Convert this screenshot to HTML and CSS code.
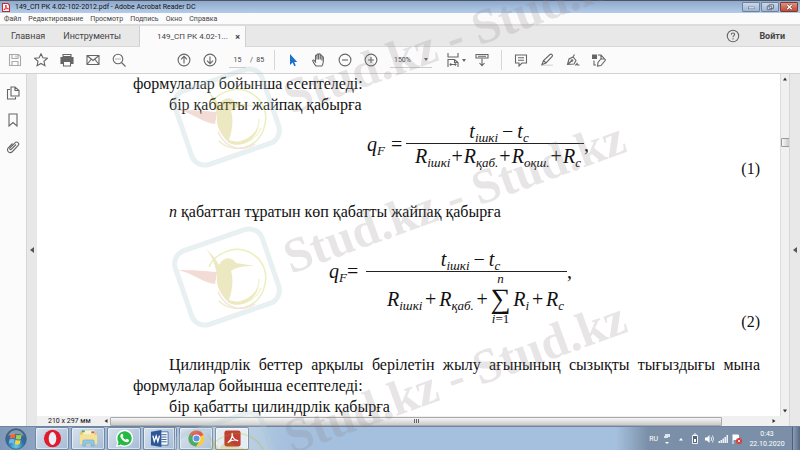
FILE: index.html
```html
<!DOCTYPE html>
<html lang="ru">
<head>
    <meta charset="UTF-8">
    <meta name="viewport" content="width=device-width, initial-scale=1.0">
    <title>149_СП РК 4.02-102-2012.pdf - Adobe Acrobat Reader DC</title>
    <link rel="stylesheet" href="styles.css">
</head>
<body>
    <header class="titlebar">
        <svg class="app-icon" viewBox="0 0 8 9"><path d="M0 0h6l2 2v7H0z" fill="#d3222a"/><path d="M1 1h4.5L7 2.500V8H1z" fill="#fff"/><path d="M1.800 7C3.500 5.500 4 3.500 3.800 2 4.200 4.500 5 5.500 6.500 5.800 4.500 5.300 3 5.900 1.800 7" fill="none" stroke="#d3222a" stroke-width=".9"/></svg>
        <span class="title">149_СП РК 4.02-102-2012.pdf - Adobe Acrobat Reader DC</span>
        <button class="win-btn" aria-label="Свернуть"><svg viewBox="0 0 16 9"><rect x="5" y="4.500" width="7" height="2" fill="#fff" stroke="#56657a" stroke-width=".6"/></svg></button>
        <button class="win-btn" aria-label="Восстановить"><svg viewBox="0 0 16 9"><path d="M7 2h5v4h-5zM5 3.500h5v4H5z" fill="#e8eef6" stroke="#4c5a70" stroke-width=".9"/></svg></button>
        <button class="win-btn close" aria-label="Закрыть"><svg viewBox="0 0 16 9"><path d="M6 2l5 5M11 2L6 7" stroke="#5d2a25" stroke-width="2.600"/><path d="M6 2l5 5M11 2L6 7" stroke="#fff" stroke-width="1.600"/></svg></button>
    </header>

    <nav class="menu">
        <a href="#">Файл</a>
        <a href="#">Редактирование</a>
        <a href="#">Просмотр</a>
        <a href="#">Подпись</a>
        <a href="#">Окно</a>
        <a href="#">Справка</a>
    </nav>

    <div class="tabs">
        <div class="main-tabs">
            <button>Главная</button>
            <button>Инструменты</button>
        </div>
        <div class="doc-tab">
            <span>149_СП РК 4.02-1...</span>
            <button aria-label="Закрыть вкладку">×</button>
        </div>
        <div class="account">
            <button aria-label="Помощь"><svg class="icon" viewBox="0 0 14 14"><circle cx="7" cy="7" r="5.700"/><path d="M5.300 5.700C5.300 3.300 8.800 3.500 8.600 5.500 8.500 6.600 7 6.700 7 8.200M7 9.300v1.200"/></svg></button>
            <button class="login">Войти</button>
        </div>
    </div>

    <div class="toolbar">
        <div class="tool-group">
            <button aria-label="Сохранить"><svg class="icon light" viewBox="0 0 14 14"><path d="M1.500 1.500h9l2 2v9h-11zM4 1.500v4h6v-4M4 12.500v-4h6v4M8 2.500v2"/></svg></button>
            <button aria-label="Избранное"><svg class="icon" viewBox="0 0 14 14"><path d="M7 .8l1.900 4 4.400.5-3.300 3 .9 4.400L7 10.500l-3.900 2.200.9-4.400-3.300-3 4.400-.5z"/></svg></button>
            <button aria-label="Печать"><svg class="icon" viewBox="0 0 14 14"><path d="M3 1.500h8v2H3z"/><path d="M1 4.500h12v6h-2v-2H3v2H1z" fill="#666"/><path d="M3.500 8.500h7v4.500h-7z" fill="#fff"/></svg></button>
            <button aria-label="Почта"><svg class="icon" viewBox="0 0 14 14"><path d="M1 2.500h12v9H1zM1 2.500l6 5 6-5M1 11.500L5 6.500M13 11.500L9 6.500"/></svg></button>
            <button aria-label="Найти"><svg class="icon" viewBox="0 0 14 14"><circle cx="6" cy="6" r="4.800"/><path d="M9.500 9.500l4 4"/><path d="M3.500 6h1M5.500 6h1M7.500 6h1"/></svg></button>
        </div>
        <div class="tool-group pages">
            <button aria-label="Предыдущая страница"><svg class="icon" viewBox="0 0 14 14"><circle cx="7" cy="7" r="5.900"/><path d="M7 10.500v-7M4 6.300l3-3 3 3"/></svg></button>
            <button aria-label="Следующая страница"><svg class="icon" viewBox="0 0 14 14"><circle cx="7" cy="7" r="5.900"/><path d="M7 3.500v7M4 7.700l3 3 3-3"/></svg></button>
            <input class="page-num" type="text" value="15" aria-label="Номер страницы">
            <span class="page-total">/&nbsp; 85</span>
        </div>
        <div class="tool-group">
            <button aria-label="Выделение"><svg class="icon" viewBox="0 0 14 14"><path d="M4 1v11l2.600-2.400L8.300 13.200l1.500-.8-1.600-3.400h3z" fill="#1d6fd0" stroke="none"/></svg></button>
            <button aria-label="Рука"><svg class="icon" viewBox="0 0 14 14"><path d="M4 13C2.500 11.500 1.500 9.500.8 8 .5 6.800 1.800 6.600 2.500 7.800L3.500 9V3c0-1 1.500-1 1.500 0v3.500V1.800c0-1 1.600-1 1.600 0V6.500v-5c0-1 1.700-1 1.700 0v5V2.800c0-1 1.600-1 1.600 0V7.500V4.500c0-1 1.500-1 1.500 0C11.500 8 11.500 11 9.800 13z"/></svg></button>
            <button aria-label="Уменьшить"><svg class="icon" viewBox="0 0 14 14"><circle cx="7" cy="7" r="5.900"/><path d="M4 7h6"/></svg></button>
            <button aria-label="Увеличить"><svg class="icon" viewBox="0 0 14 14"><circle cx="7" cy="7" r="5.900"/><path d="M4 7h6M7 4v6"/></svg></button>
        </div>
        <div class="zoom">
            <select aria-label="Масштаб"><option>150%</option></select>
            <svg class="caret" viewBox="0 0 4 3"><path d="M0 0h4L2 3z"/></svg>
        </div>
        <div class="tool-group view">
            <button class="fit" aria-label="По ширине"><svg class="icon" viewBox="0 0 14 14"><path d="M2 0v4h10V0M2 14V6.500h6.500L12 9.500V14M8.500 6.500v3H12M4 11.500h6M5.200 10.300L4 11.500l1.200 1.200M8.800 10.300l1.200 1.200-1.200 1.200"/></svg><svg class="caret" viewBox="0 0 4 3"><path d="M0 0h4L2 3z"/></svg></button>
            <button aria-label="Прокрутка"><svg class="icon" viewBox="0 0 14 14"><path d="M1 1.500h12v3.500H1zM3 3.200h8"/><path d="M7 5.500v7M4.500 10L7 12.700 9.500 10"/></svg></button>
        </div>
        <div class="tool-group">
            <button aria-label="Комментарий"><svg class="icon" viewBox="0 0 14 14"><path d="M1.500 2h11v8H8l-3 3v-3H1.500zM4 4.800h6M4 7.200h6"/></svg></button>
            <button aria-label="Маркер"><svg class="icon" viewBox="0 0 14 14"><path d="M1 11.500h12v1.500H1z" fill="#ddd" stroke="none"/><path d="M2 11.500l1.500-4L10 1.500c1.500-1 3.200.5 2.200 2L6 10zM3.500 7.500L6 10"/></svg></button>
            <button aria-label="Подпись"><svg class="icon" viewBox="0 0 14 14"><path d="M1.500 11.500l1.500-5.500 4-2 3 3.500-2 3.500zM7 4l1.500-2.500M1.500 11.500L5.500 8M9 12h1l1-1.500.5 1.500h2"/><circle cx="6" cy="7.500" r=".8"/></svg></button>
            <button aria-label="Другие инструменты"><svg class="icon" viewBox="0 0 14 14"><path d="M.5 2h4v3.500h-4z" fill="#666"/><path d="M6 2h3l4.500 5L9 12.500 5.500 13 6 9.500 9.500 5M2 7.500V12h2M9 2v4h3"/></svg></button>
        </div>
    </div>

    <main class="workspace">
        <aside class="sidebar">
            <button aria-label="Миниатюры"><svg class="icon" viewBox="0 0 14 14"><path d="M5 1h4l4 3.500V10H5zM9 1v3.500h4M4 3.500H1.500V13h8v-2"/></svg></button>
            <button aria-label="Закладки"><svg class="icon" viewBox="0 0 14 14"><path d="M3 1h8v12L7 9.500 3 13z"/></svg></button>
            <button aria-label="Вложения"><svg class="icon" viewBox="0 0 14 14"><path d="M10 4.500L5.500 9.200c-1 1-2.400-.3-1.400-1.400L9 2.800c2-2 5 .6 3 2.900L6.500 11.500c-2.800 2.800-6.700-.8-4.200-3.600L6.500 3.500"/></svg></button>
        </aside>
        <button class="collapse" aria-label="Показать панель"><svg class="tri" viewBox="0 0 4 6"><path d="M4 0v6L0 3z"/></svg></button>

        <section class="viewer">
            <article class="page" lang="kk">
                <p>формулалар бойынша есептеледі:</p>
                <p class="indent">бір қабатты жайпақ қабырға</p>

                <div class="equation first">
                    <div class="formula">
                        <span class="lhs"><i>q<sub>F</sub></i><span>=</span></span>
                        <div class="fraction">
                            <div class="numerator"><i>t<sub>ішкі</sub></i><span>−</span><i>t<sub>c</sub></i></div>
                            <div class="denominator">
                                <i>R<sub>ішкі</sub></i><span>+</span><i>R<sub>қаб.</sub></i><span>+</span><i>R<sub>оқш.</sub></i><span>+</span><i>R<sub>c</sub></i>
                            </div>
                        </div>
                        <span class="comma">,</span>
                    </div>
                    <span class="eq-num">(1)</span>
                </div>

                <p class="indent"><i>n</i> қабаттан тұратын көп қабатты жайпақ қабырға</p>

                <div class="equation second">
                    <div class="formula">
                        <span class="lhs"><i>q<sub>F</sub></i><span>=</span></span>
                        <div class="fraction">
                            <div class="numerator"><i>t<sub>ішкі</sub></i><span>−</span><i>t<sub>c</sub></i></div>
                            <div class="denominator">
                                <i>R<sub>ішкі</sub></i><span>+</span><i>R<sub>қаб.</sub></i><span>+</span>
                                <div class="sum"><i>n</i><span class="sigma">∑</span><span><i>i</i>=1</span></div>
                                <i>R<sub>i</sub></i><span>+</span><i>R<sub>c</sub></i>
                            </div>
                        </div>
                        <span class="comma">,</span>
                    </div>
                    <span class="eq-num">(2)</span>
                </div>

                <p class="indent justify">Цилиндрлік беттер арқылы берілетін жылу ағынының сызықты тығыздығы мына формулалар бойынша есептеледі:</p>
                <p class="indent">бір қабатты цилиндрлік қабырға</p>
            </article>
            <div class="vscroll">
                <svg class="arrow" viewBox="0 0 4 3"><path d="M0 3h4L2 0z"/></svg>
                <div class="vthumb"></div>
                <svg class="arrow" viewBox="0 0 4 3"><path d="M0 0h4L2 3z"/></svg>
            </div>
            <div class="hscroll">
                <span class="page-size">210 x 297 мм</span>
                <svg class="arrow" viewBox="0 0 3 4"><path d="M3 0v4L0 2z"/></svg>
                <div class="htrack"><div class="hthumb"><span></span><span></span><span></span></div></div>
                <svg class="arrow" viewBox="0 0 3 4"><path d="M0 0v4l3-2z"/></svg>
            </div>
        </section>

        <button class="collapse" aria-label="Показать инструменты"><svg class="tri" viewBox="0 0 4 6"><path d="M4 0v6L0 3z"/></svg></button>
    </main>

    <footer class="taskbar">
        <button class="start" aria-label="Пуск">
            <svg viewBox="0 0 22 22">
                <defs><radialGradient id="orb" cx=".5" cy=".85" r=".8"><stop offset="0" stop-color="#5fd0ee"/><stop offset=".5" stop-color="#2d6ea3"/><stop offset="1" stop-color="#46617f"/></radialGradient></defs>
                <circle cx="11" cy="11" r="10.300" fill="url(#orb)" stroke="#3d5878" stroke-width=".7"/>
                <path d="M5.500 6.300c2-1 3.600-.8 5 0l-.8 4.200c-1.500-.8-3.200-.8-5 0z" fill="#ee6a35"/>
                <path d="M11.500 6.600c1.600.9 3.300 1 5.200 0l-.9 4.300c-1.900.9-3.600.7-5.100-.1z" fill="#a3cf4e"/>
                <path d="M4.500 11.500c1.900-.9 3.500-.8 5 0l-.8 4.200c-1.500-.9-3.100-.9-5 0z" fill="#6bb7ee"/>
                <path d="M10.500 11.800c1.600.9 3.200 1 5.100.1l-.9 4.200c-1.800.9-3.500.8-5-.1z" fill="#fbd144"/>
                <path d="M3 8C6 0 16 0 19 8 14 5 8 5 3 8" fill="#fff" opacity=".35"/>
            </svg>
        </button>
        <div class="tasks">
            <button aria-label="Opera"><svg viewBox="0 0 20 20"><ellipse cx="10" cy="10" rx="9" ry="9.300" fill="#e11b2b"/><ellipse cx="10" cy="10" rx="4" ry="6.800" fill="#eaf0f7"/></svg></button>
            <button aria-label="Проводник"><svg viewBox="0 0 20 20"><path d="M1 3h6l1 1.500h11V16H1z" fill="#e9c86b"/><path d="M4 1.500h12V6H4z" fill="#f7f3cf"/><path d="M3 1.500h3v2H3z" fill="#4aa86a"/><path d="M13 2.500h3v2h-3z" fill="#d65c3c"/><path d="M1 6h18v10H1z" fill="#f6e196"/><path d="M4 18v-5q0-1.500 1.500-1.500h9q1.500 0 1.500 1.500v5h-3v-3H7v3z" fill="#8fc8e8" stroke="#5fa4d2" stroke-width=".6"/></svg></button>
            <button aria-label="WhatsApp"><svg viewBox="0 0 20 20"><path d="M1 19l1.300-4.700A9 9 0 1 1 6 17.800z" fill="#fff"/><path d="M2.700 17.300l1-3.400a7.500 7.500 0 1 1 2.600 2.500z" fill="#25b944"/><path d="M6.500 5.500c1-.8 1.600-.4 2.300 1.700l-.7 1.200c.8 1.500 1.800 2.400 3.300 3l1.100-1.100 2.400 1.200c0 2-1.900 2.800-3.600 2.300C8 12.700 6 10 5.600 8c0-1 .2-1.900.9-2.500" fill="#fff"/></svg></button>
            <button class="stacked" aria-label="Word"><svg viewBox="0 0 20 20"><path d="M9 3h10v14H9z" fill="#fff" stroke="#2b579a" stroke-width=".8"/><path d="M12 6h5.500M12 8.500h5.500M12 11h5.500M12 13.500h5.500" stroke="#2b579a"/><path d="M1 3l11-2v18L1 17z" fill="#2b579a"/><path d="M3 7l1.500 6L6.500 7.500 8.300 13 10 7" fill="none" stroke="#fff" stroke-width="1.400"/></svg></button>
            <button aria-label="Chrome"><svg viewBox="0 0 20 20"><circle cx="10" cy="10" r="8.500" fill="#f5c934"/><path d="M10 10L2.600 5.800A8.500 8.500 0 0 1 17.400 6z" fill="#dc4a3d"/><path d="M10 10L2.600 5.800A8.500 8.500 0 0 0 9.500 18.500L13.500 12z" fill="#35a055"/><circle cx="10" cy="10" r="4.100" fill="#fff"/><circle cx="10" cy="10" r="3.200" fill="#4b87e8"/></svg></button>
            <button class="active" aria-label="Acrobat Reader"><svg viewBox="0 0 20 20"><rect x="1.500" y="1.500" width="17" height="17" rx="2.500" fill="#b8281e"/><path d="M5 14.500C8 12.500 10 8.500 9.600 4.500 9.600 8.500 12 11.700 15.500 12.200 12 11 8 11.800 5 14.500" fill="none" stroke="#fff" stroke-width="1.300" stroke-linejoin="round"/></svg></button>
        </div>
        <div class="tray">
            <span class="lang">RU</span>
            <svg viewBox="0 0 10 12"><path d="M3 1h5v3H3zM2 3h4v2H2z" fill="#dce5ee"/><path d="M3 9h4L5 11z" fill="#fff"/></svg>
            <svg viewBox="0 0 10 12"><path d="M3 7.500h4L5 5z" fill="#fff"/></svg>
            <svg viewBox="0 0 10 12"><path d="M2.500 2.500h5v8h-5zM4 1h2v1.500H4z" fill="#50647c" stroke="#fff" stroke-width=".9"/><path d="M4 6h2v3H4z" fill="#fff"/></svg>
            <svg viewBox="0 0 10 12"><path d="M1 4.500h2l2.500-2.500v8L3 7.500H1z" fill="#fff"/><path d="M7 4q1.300 2 0 4M8.500 2.500q2 3.500 0 7" fill="none" stroke="#fff" stroke-width=".8"/></svg>
            <svg viewBox="0 0 10 12"><path d="M.5 10V8h1.500v2zM2.500 10V7H4v3zM4.500 10V5.500H6V10zM6.500 10V4H8v6zM8.500 10V2H10v8z" fill="#eef3f8"/></svg>
            <svg viewBox="0 0 10 12"><path d="M1 1.500V11M1 2h5.500v4.500H1" fill="#fff" stroke="#fff"/><circle cx="7" cy="8" r="3" fill="#d93a34"/><path d="M5.800 6.800l2.400 2.400M8.200 6.800L5.800 9.200" stroke="#fff" stroke-width=".8"/></svg>
            <div class="clock"><span>0:43</span><span>22.10.2020</span></div>
            <button class="desktop" aria-label="Показать рабочий стол"></button>
        </div>
    </footer>

    <svg class="watermark" viewBox="0 0 800 450" preserveAspectRatio="xMinYMin slice">
        <defs>
            <g id="bird">
                <g transform="rotate(-19)">
                    <rect x="-46" y="-39" width="92" height="78" rx="14" fill="#fff" fill-opacity=".35" stroke="#b7d0d6" stroke-width="5"/>
                </g>
                <path d="M-18-10C-12-24 8-32 22-25 36-18 43-4 36 14 28 32 6 37-8 24" fill="none" stroke="#bfce2e" stroke-width="1.500"/>
                <path d="M-9 15C0 34 16 34 28 27" fill="none" stroke="#e88d95" stroke-width="1.200"/>
                <path d="M-21-28C-14-22-10-16-8-12-4-20 4-21 9-14L28-11C16-11 9-10 4-6 7 4 5 14 2 23 14 27 22 23 32 10 26 26 14 31 2 26-8 16-11 8-10 0-11-10-14-20-21-28" fill="#c3b63a"/>
                <path d="M-49-7C-34-7-22-6-10-5L-12 7C-24 6-34-4-49-7" fill="#d9897a"/>
                <path d="M32 2C32 14 24 22 14 24M34 11C30 20 24 24 16 26" fill="none" stroke="#bfce2e"/>
            </g>
        </defs>
        <use href="#bird" x="227" y="117" opacity=".3"/>
        <use href="#bird" x="227" y="277" opacity=".3"/>
        <use href="#bird" x="227" y="461" opacity=".3"/>
        <text transform="translate(291 114) rotate(-20)">Stud.kz - Stud.kz</text>
        <text transform="translate(291 274) rotate(-20)">Stud.kz - Stud.kz</text>
        <text transform="translate(292 454) rotate(-20)">Stud.kz - Stud.kz</text>
    </svg>
</body>
</html>
```

FILE: styles.css
```css
* {
    box-sizing: border-box;
}
body {
    margin: 0;
    height: 100vh;
    display: flex;
    flex-direction: column;
    overflow: hidden;
    position: relative;
    font-family: Roboto, "Open Sans", sans-serif;
    font-size: 7px;
    color: #444;
    background: #fbfbfb;
}
button, input, select {
    font: inherit;
    color: inherit;
    margin: 0;
    padding: 0;
    border: none;
    background: none;
}
a {
    color: inherit;
    text-decoration: none;
}
p {
    margin: 0;
}
svg {
    display: block;
    flex: none;
}
.icon {
    width: 14px;
    height: 14px;
    fill: none;
    stroke: #666;
    stroke-width: 1.1;
}
.icon.light {
    stroke: #aaa;
}
.caret {
    width: 4px;
    height: 3px;
    fill: #666;
}

/* title bar */
.titlebar {
    display: flex;
    align-items: center;
    height: 13px;
    padding: 0 2px;
    border-top: 1px solid #4d5563;
    background: linear-gradient(#8ea9cd, #b4cce8);
    color: #111;
}
.app-icon {
    width: 8px;
    height: 9px;
    margin-right: 5px;
}
.title {
    flex: 1;
}
.win-btn {
    width: 18px;
    height: 10px;
    margin-left: 1px;
    border: 1px solid #6e809a;
    border-radius: 1px;
    background: linear-gradient(#c9d8ea, #9fb6d3);
}
.win-btn svg {
    width: 16px;
    height: 8px;
}
.win-btn.close {
    border-color: #7c3a34;
    background: linear-gradient(#dd9184, #c04a34);
}

/* menu */
.menu {
    display: flex;
    align-items: center;
    gap: 7px;
    height: 11px;
    padding-left: 4px;
}

/* tabs */
.tabs {
    display: flex;
    height: 23px;
    border-top: 2px solid #dcdcdc;
    border-bottom: 1px solid #d8d8d8;
    background: #e8e8e8;
    font-size: 9px;
}
.main-tabs {
    display: flex;
    gap: 18px;
    width: 140px;
    padding-left: 11px;
    border-right: 1px solid #d0d0d0;
}
.doc-tab {
    display: flex;
    align-items: center;
    justify-content: space-between;
    width: 106px;
    height: 21px;
    padding: 0 5px 0 17px;
    border-right: 1px solid #d0d0d0;
    background: #fbfbfb;
    font-size: 8px;
    white-space: nowrap;
}
.doc-tab button {
    font-size: 9px;
    font-weight: bold;
}
.account {
    display: flex;
    align-items: center;
    gap: 19px;
    margin-left: auto;
    padding-right: 15px;
}
.login {
    font-weight: bold;
}

/* toolbar */
.toolbar {
    display: flex;
    align-items: center;
    height: 27px;
    padding-left: 2px;
    border-bottom: 1px solid #d2d2d2;
}
.tool-group {
    display: flex;
    align-items: center;
}
.tool-group button {
    display: flex;
    align-items: center;
    justify-content: center;
    width: 26px;
    height: 20px;
}
.pages {
    width: 104px;
    margin-left: 39px;
    margin-right: 5px;
    border-right: 1px solid #d6d6d6;
}
.page-num {
    width: 17px;
    height: 16px;
    margin: 0 4px 0 6px;
    border-bottom: 1px solid #ccc;
    text-align: center;
}
.zoom {
    display: flex;
    align-items: center;
    width: 42px;
    height: 16px;
    margin-left: 6px;
    padding-right: 4px;
    border-bottom: 1px solid #ccc;
}
.zoom select {
    flex: 1;
    appearance: none;
    padding-left: 4px;
}
.view {
    margin: 0 6px 0 11px;
    padding-right: 6px;
    border-right: 1px solid #d6d6d6;
}
.tool-group .fit {
    gap: 2px;
}

/* workspace */
.workspace {
    display: flex;
    flex: 1;
    min-height: 0;
}
.sidebar {
    display: flex;
    flex-direction: column;
    align-items: center;
    gap: 13px;
    width: 26px;
    padding-top: 12px;
}
.collapse {
    display: flex;
    align-items: center;
    justify-content: center;
    width: 11px;
    border-left: 1px solid #d6d6d6;
    background: #e8e8e8;
}
.tri {
    width: 4px;
    height: 6px;
    fill: #555;
}
.viewer {
    display: grid;
    grid-template-columns: 1fr 9px;
    grid-template-rows: 1fr 10px;
    flex: 1;
    min-width: 0;
}
.page {
    overflow: hidden;
    padding: 0 20px 0 96px;
    background: #fff;
    color: #111;
    font-family: "Liberation Serif", serif;
    font-size: 16px;
    line-height: 21px;
}
/* the page is scrolled a little past its first visible line */
.page p:first-child {
    margin-top: -1px;
}
.indent {
    text-indent: 36px;
}
.justify {
    text-align: justify;
}
.equation {
    display: flex;
    justify-content: space-between;
    align-items: flex-end;
    margin-bottom: 22px;
}
.equation.first {
    height: 64px;
    padding-left: 234px;
}
.equation.second {
    height: 110px;
    padding-left: 196px;
}
.formula {
    display: flex;
    align-self: flex-start;
    align-items: center;
    font-size: 20px;
    line-height: 24px;
}
.first .formula {
    padding-top: 4px;
}
.second .formula {
    padding-top: 25px;
    align-items: flex-start;
}
.formula sub {
    font-size: 13px;
    line-height: 0;
    vertical-align: -4px;
}
.lhs {
    display: flex;
    gap: 6px;
    width: 39px;
}
.second .lhs {
    gap: 0;
    width: 37px;
    padding-top: 12px;
}
.numerator {
    display: flex;
    justify-content: center;
    gap: 4px;
    padding-left: 8px;
    border-bottom: 1px solid #222;
}
.denominator {
    display: flex;
    justify-content: space-between;
    align-items: center;
}
.first .fraction {
    width: 178px;
}
.first .denominator {
    padding: 0 3px 0 9px;
}
.second .fraction {
    width: 201px;
}
.second .denominator {
    padding: 0 3px 0 21px;
}
.second .comma {
    padding-top: 12px;
}
.sum {
    display: flex;
    flex-direction: column;
    align-items: center;
    font-size: 13px;
    line-height: 14px;
}
.sigma {
    font-size: 28px;
    line-height: 26px;
}

/* scroll bars */
.arrow {
    width: 4px;
    height: 4px;
    fill: #333;
}
.vscroll {
    display: flex;
    flex-direction: column;
    align-items: center;
    padding: 3px 0;
    border-left: 1px solid #ddd;
    background: #f0f0f0;
}
.vthumb {
    width: 9px;
    height: 9px;
    margin: 57px 0 auto;
    border: 1px solid #999;
    border-radius: 1px;
    background: linear-gradient(90deg, #f8f8f8, #c8c8c8);
}
.hscroll {
    grid-column: 1 / 3;
    display: flex;
    align-items: center;
    padding-right: 13px;
    background: #f0f0f0;
}
.page-size {
    width: 67px;
    padding-left: 11px;
    color: #111;
}
.htrack {
    flex: 1;
    padding: 0 50px 0 2px;
}
.hthumb {
    display: flex;
    align-items: center;
    justify-content: center;
    gap: 1px;
    height: 9px;
    border: 1px solid #aaa;
    border-radius: 1px;
    background: linear-gradient(#f6f6f6, #c9c9c9);
}
.hthumb span {
    width: 1px;
    height: 4px;
    background: #666;
}

/* taskbar */
.taskbar {
    display: flex;
    height: 24px;
    border-top: 1px solid #6f849f;
    background: linear-gradient(90deg, #8099b8, #a3b9d3 12%, #b5cbe0 30%, #a5c0de 36%, #a5c0de 77%, #7b90a8 81%);
}
.start {
    width: 31px;
    padding-left: 5px;
}
.start svg {
    width: 22px;
    height: 22px;
}
.tasks {
    display: flex;
    gap: 2px;
    padding-left: 4px;
}
.tasks button {
    display: flex;
    align-items: center;
    justify-content: center;
    width: 34px;
    height: 23px;
    border: 1px solid #7288a5;
    border-radius: 2px;
    background: linear-gradient(135deg, #d5e1ee, #a6bcd6);
    box-shadow: inset 0 0 0 1px rgba(255, 255, 255, 0.5);
}
.tasks .stacked {
    border-right: 3px double #7288a5;
}
.tasks .active {
    background: #e3eaf2;
}
.tasks svg {
    width: 19px;
    height: 19px;
}
.tray {
    display: flex;
    align-items: center;
    gap: 4px;
    margin-left: auto;
    color: #fff;
}
.tray svg {
    width: 10px;
    height: 12px;
}
.clock {
    display: flex;
    flex-direction: column;
    align-items: center;
    width: 42px;
    line-height: 10px;
}
.desktop {
    width: 8px;
    height: 23px;
    border-left: 1px solid #4e6078;
    background: linear-gradient(90deg, #8a9db4, #566a84);
}

/* watermark over the whole window */
.watermark {
    position: absolute;
    inset: 0;
    width: 100%;
    height: 100%;
    pointer-events: none;
}
.watermark text {
    font-family: "Liberation Serif", serif;
    font-size: 49px;
    font-weight: bold;
    fill: #857f82;
    fill-opacity: 0.2;
}
```
